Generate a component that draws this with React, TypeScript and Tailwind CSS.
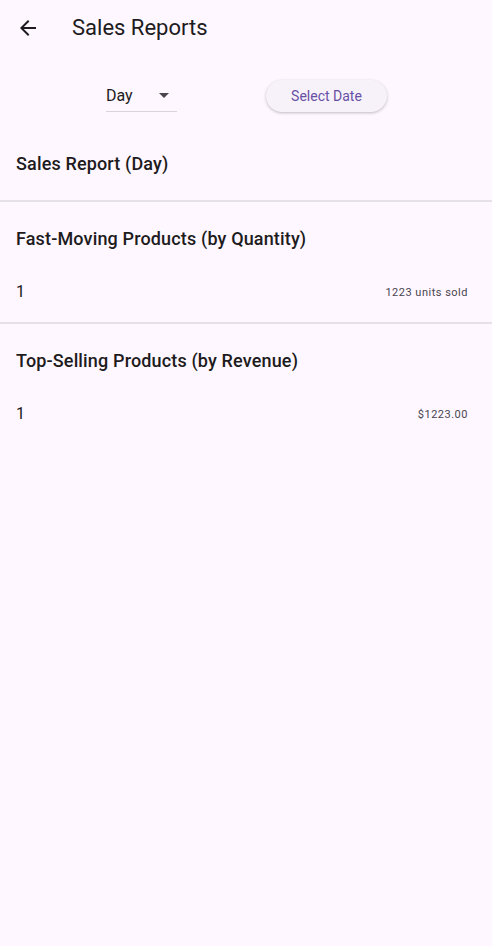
import React from 'react';

const sections = [
  { title: 'Fast-Moving Products (by Quantity)', rows: [{ name: '1', value: '1223 units sold' }] },
  { title: 'Top-Selling Products (by Revenue)', rows: [{ name: '1', value: '$1223.00' }] },
];

export default function App() {
  return (
    <div className="min-h-[946px] w-full bg-[#fef7ff] text-[#1d1b20] font-['Roboto',sans-serif]">
      <header className="flex h-14 items-center">
        <button className="ml-4 flex h-6 w-6 items-center justify-center">
          <svg viewBox="0 0 24 24" className="h-6 w-6" fill="#1d1b20">
            <path d="M20 11H7.83l5.59-5.59L12 4l-8 8 8 8 1.41-1.41L7.83 13H20v-2z" />
          </svg>
        </button>
        <h1 className="ml-8 text-[22px] leading-7">Sales Reports</h1>
      </header>

      <div className="flex h-20 items-center">
        <div className="ml-[106px] flex h-8 w-[71px] items-center border-b border-[#d9d3dc] pb-[1px]">
          <span className="mt-[2px] text-base leading-6">Day</span>
          <svg viewBox="0 0 10 5" className="ml-auto mr-[8px] h-[5px] w-[10px]" fill="#49454f">
            <path d="M0 0l5 5 5-5z" />
          </svg>
        </div>
        <button className="ml-[89px] h-8 w-[121px] rounded-full bg-[#f7f2fa] text-sm text-[#6750a4] shadow-[0_1px_3px_rgba(0,0,0,0.25)]">
          Select Date
        </button>
      </div>

      <div className="flex h-14 items-center px-4">
        <h2 className="text-lg font-medium tracking-[0.15px]">Sales Report (Day)</h2>
      </div>

      {sections.map((s) => (
        <section key={s.title} className="pb-2">
          <div className="mt-[8px] h-[2px] bg-[#e6e0e9]" />
          <div className="flex h-[74px] items-center px-4">
            <h2 className="text-lg font-medium tracking-[0.15px]">{s.title}</h2>
          </div>
          {s.rows.map((r) => (
            <div key={r.name} className="flex h-[30px] items-center pl-4 pr-6 pt-[2px]">
              <span className="text-base">{r.name}</span>
              <span className="ml-auto mt-[2px] text-[11px] tracking-[0.5px] text-[#49454f]">{r.value}</span>
            </div>
          ))}
        </section>
      ))}
    </div>
  );
}
